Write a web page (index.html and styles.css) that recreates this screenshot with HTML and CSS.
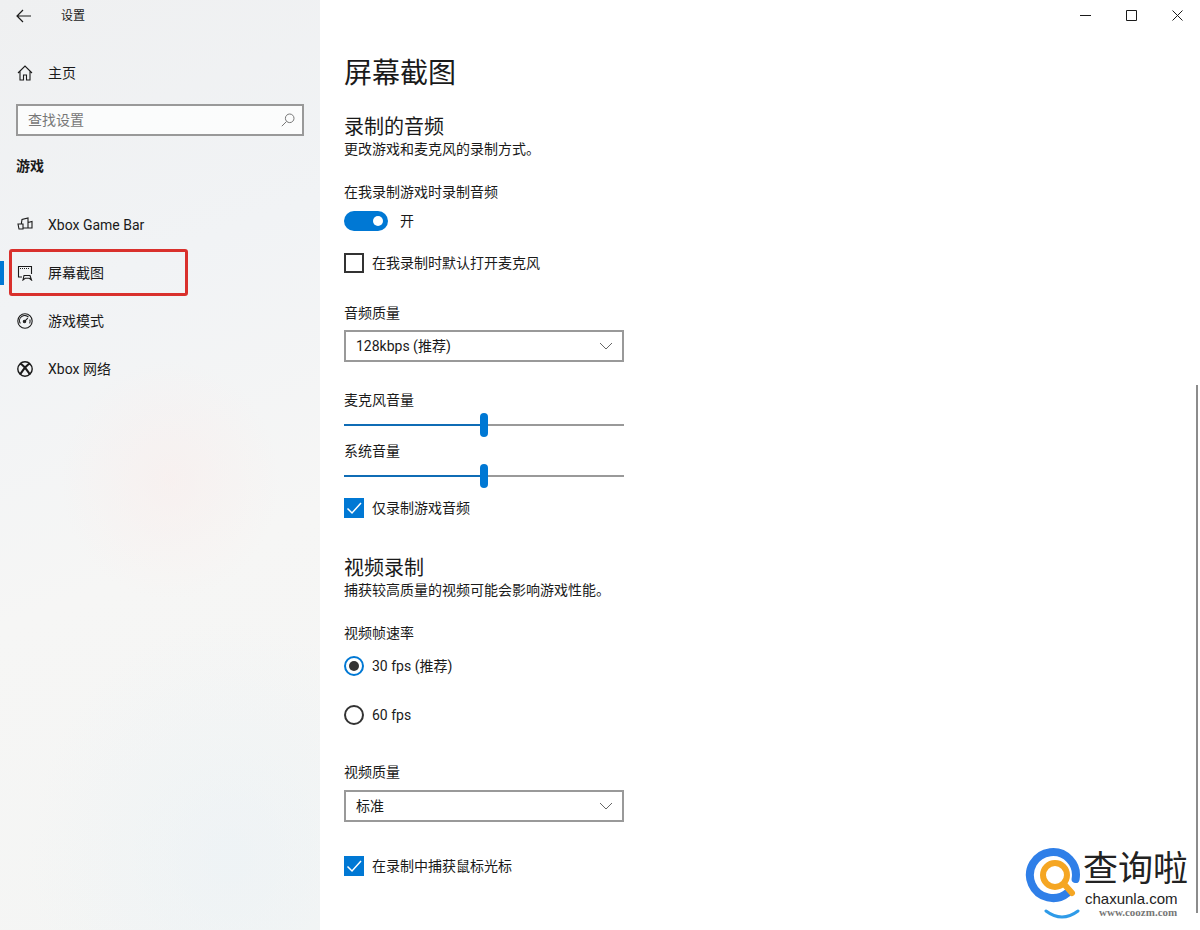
FILE: index.html
```html
<!DOCTYPE html>
<html lang="zh-CN">

<head>
    <meta charset="UTF-8">
    <title>设置</title>
    <link rel="stylesheet" href="styles.css">
</head>

<body>
    <aside class="sidebar">
        <div class="titlebar">
            <svg class="back-icon" width="16" height="14" viewBox="0 0 16 14"><path d="M7 1L1 7l6 6M1 7h14" /></svg>
            <span class="app-name">设置</span>
        </div>

        <div class="nav-item home-item">
            <svg class="nav-icon" width="16" height="16" viewBox="0 0 16 16"><path d="M1 8L8 1l7 7M3 6v9h3.500v-5h3v5H13V6" /></svg>
            <span>主页</span>
        </div>

        <div class="search-box">
            <span>查找设置</span>
            <svg class="search-icon" width="14" height="14" viewBox="0 0 14 14"><circle cx="8.700" cy="5.300" r="4.300" /><path d="M5.600 8.400L.8 13.200" /></svg>
        </div>

        <div class="group-title">游戏</div>

        <nav class="nav-list">
            <div class="nav-item">
                <svg class="nav-icon" width="16" height="16" viewBox="0 0 16 16"><path d="M1 7h5v5H2zM4.300 7L5 2.500l6-1.500v10H6M11 5.500l4-1v6.500h-4" /></svg>
                <span>Xbox Game Bar</span>
            </div>
            <div class="nav-item active">
                <svg class="nav-icon" width="16" height="16" viewBox="0 0 16 16"><path d="M1 1.500h14M1.500 1.500V12H5M14.500 1.500V9" /><path d="M6 15l1-4.500h6l1.500 4.500-2.200-1.700H8.200z" /><path class="dots" d="M3 3.500h10" /></svg>
                <span>屏幕截图</span>
                <div class="highlight"></div>
            </div>
            <div class="nav-item">
                <svg class="nav-icon" width="16" height="16" viewBox="0 0 16 16"><circle cx="8" cy="8" r="7.200" /><path d="M3.300 10.500A5.200 5.200 0 0 1 11.500 4.200M12.800 6.500a5.200 5.200 0 0 1-.1 4M6.800 9.200l4-4" /><circle cx="7.500" cy="8.500" r="1.200" /></svg>
                <span>游戏模式</span>
            </div>
            <div class="nav-item">
                <svg class="nav-icon" width="16" height="16" viewBox="0 0 16 16"><circle cx="8" cy="8" r="7.200" stroke-width="1.400" /><path class="xbox-cross" d="M3 2.500C6 3.500 10 9 13 13.500M13 2.500C10 3.500 6 9 3 13.500" /></svg>
                <span>Xbox 网络</span>
            </div>
        </nav>
    </aside>

    <main class="content">
        <h1>屏幕截图</h1>

        <h2 class="first-heading">录制的音频</h2>
        <p>更改游戏和麦克风的录制方式。</p>

        <div class="label record-label">在我录制游戏时录制音频</div>
        <div class="toggle-row">
            <span class="toggle"><span class="toggle-knob"></span></span>
            <span>开</span>
        </div>
        <div class="check-row mic-check">
            <span class="checkbox"></span>
            <span>在我录制时默认打开麦克风</span>
        </div>

        <div class="label quality-label">音频质量</div>
        <div class="select">
            <span>128kbps (推荐)</span>
            <svg width="14" height="8" viewBox="0 0 14 8"><path d="M1 1l6 6 6-6" /></svg>
        </div>

        <div class="label mic-label">麦克风音量</div>
        <div class="slider">
            <span class="slider-fill"></span><span class="slider-thumb"></span><span class="slider-rest"></span>
        </div>
        <div class="label system-label">系统音量</div>
        <div class="slider">
            <span class="slider-fill"></span><span class="slider-thumb"></span><span class="slider-rest"></span>
        </div>
        <div class="check-row game-check">
            <span class="checkbox checked"><svg width="20" height="20" viewBox="0 0 20 20"><path d="M3.500 10.500l4.500 4.500 9-10" /></svg></span>
            <span>仅录制游戏音频</span>
        </div>

        <h2 class="video-heading">视频录制</h2>
        <p>捕获较高质量的视频可能会影响游戏性能。</p>

        <div class="label rate-label">视频帧速率</div>
        <div class="radio-row first-radio">
            <span class="radio selected"></span>
            <span>30 fps (推荐)</span>
        </div>
        <div class="radio-row second-radio">
            <span class="radio"></span>
            <span>60 fps</span>
        </div>

        <div class="label video-quality-label">视频质量</div>
        <div class="select video-select">
            <span>标准</span>
            <svg width="14" height="8" viewBox="0 0 14 8"><path d="M1 1l6 6 6-6" /></svg>
        </div>
        <div class="check-row cursor-check">
            <span class="checkbox checked"><svg width="20" height="20" viewBox="0 0 20 20"><path d="M3.500 10.500l4.500 4.500 9-10" /></svg></span>
            <span>在录制中捕获鼠标光标</span>
        </div>

        <!-- window buttons -->
        <div class="window-controls">
            <svg width="11" height="11" viewBox="0 0 11 11"><path d="M0 5.500h11" /></svg>
            <svg width="11" height="11" viewBox="0 0 11 11"><path d="M.5.500h10v10H.5z" /></svg>
            <svg width="11" height="11" viewBox="0 0 11 11"><path d="M.5.500l10 10M10.500.500l-10 10" /></svg>
        </div>

        <div class="scrollbar"></div>

        <div class="watermark">
            <svg class="watermark-icon" width="62" height="74" viewBox="0 0 62 74">
                <path class="ring" d="M42.800 46.600A23 23 0 1 1 50.600 33" />
                <circle class="lens" cx="30" cy="29" r="12" />
                <path class="lens" d="M39 38l8 9" />
                <path class="smile" d="M21 65q16 12 32 0" />
            </svg>
            <div class="watermark-text">
                <div class="watermark-name">查询啦</div>
                <div class="watermark-domain">chaxunla.com</div>
                <div class="watermark-url">www.coozm.com</div>
            </div>
        </div>
    </main>
</body>

</html>
```

FILE: styles.css
```css
* {
    box-sizing: border-box;
}

body {
    margin: 0;
    height: 930px;
    display: flex;
    overflow: hidden;
    background: #fff;
    color: #1a1a1a;
    font-family: Roboto, "Noto Sans CJK SC", sans-serif;
    font-size: 14px;
    line-height: 20px;
}

svg {
    fill: none;
    stroke: currentColor;
    stroke-width: 1;
}

/* left column */
.sidebar {
    width: 320px;
    flex-shrink: 0;
    background:
        radial-gradient(ellipse 110px 120px at 170px 480px, rgba(250, 236, 234, 0.5), rgba(250, 236, 234, 0)),
        radial-gradient(ellipse 200px 240px at 230px 860px, rgba(232, 241, 246, 0.5), rgba(232, 241, 246, 0)),
        linear-gradient(160deg, #eff0f1 0%, #f1f3f5 30%, #f6f6f5 60%, #f4f5f4 100%);
}

.titlebar {
    height: 32px;
    display: flex;
    align-items: center;
    padding-left: 16px;
}

.back-icon {
    stroke-width: 1.2;
}

.app-name {
    margin-left: 29px;
    font-size: 12px;
}

.nav-item {
    position: relative;
    height: 48px;
    display: flex;
    align-items: center;
    padding-left: 17px;
}

.nav-item span {
    margin-left: 15px;
}

.nav-icon {
    stroke-width: 1.1;
}

.dots {
    stroke-dasharray: 1 1;
}

.xbox-cross {
    stroke-width: 2.2;
}

.home-item {
    margin-top: 17px;
}

.search-box {
    width: 288px;
    height: 32px;
    margin: 7px 0 0 16px;
    padding: 0 7px 0 10px;
    display: flex;
    align-items: center;
    justify-content: space-between;
    border: 2px solid #999;
    background: rgba(255, 255, 255, 0.75);
    color: #777;
}

.search-icon {
    color: #777;
}

.group-title {
    margin: 20px 0 0 16px;
    font-weight: 700;
}

.nav-list {
    margin-top: 25px;
}

.active::before {
    content: "";
    position: absolute;
    left: 0;
    top: 12px;
    width: 4px;
    height: 24px;
    background: #0078d4;
}

.highlight {
    position: absolute;
    left: 9px;
    top: 0;
    width: 179px;
    height: 47px;
    border: 3px solid #d9302c;
    border-radius: 3px;
}

/* right column */
.content {
    position: relative;
    flex: 1;
    padding: 54px 0 0 24px;
}

h1 {
    margin: 0;
    font-size: 28px;
    font-weight: 400;
    line-height: 40px;
}

h2 {
    margin: 0;
    font-size: 20px;
    font-weight: 400;
    line-height: 26px;
}

p {
    margin: 0;
}

.first-heading {
    margin-top: 20px;
    margin-bottom: -1px;
}

.video-heading {
    margin-top: 37px;
    margin-bottom: -1px;
}

.record-label {
    margin-top: 23px;
}

.rate-label {
    margin-top: 23px;
}

.quality-label {
    margin-top: 30px;
}

.mic-label {
    margin-top: 28px;
}

.system-label {
    margin-top: 4px;
}

.video-quality-label {
    margin-top: 37px;
}

.toggle-row {
    margin-top: 9px;
    height: 20px;
    display: flex;
    align-items: center;
    gap: 12px;
}

.toggle {
    width: 44px;
    height: 20px;
    padding-right: 5px;
    display: flex;
    align-items: center;
    justify-content: flex-end;
    border-radius: 10px;
    background: #0078d4;
}

.toggle-knob {
    width: 10px;
    height: 10px;
    border-radius: 50%;
    background: #fff;
}

.check-row,
.radio-row {
    height: 20px;
    display: flex;
    align-items: center;
    gap: 8px;
}

.mic-check {
    margin-top: 22px;
}

.game-check {
    margin-top: 10px;
}

.cursor-check {
    margin-top: 34px;
}

.checkbox {
    width: 20px;
    height: 20px;
    border: 2px solid #333;
}

.checkbox.checked {
    border: none;
    background: #0078d4;
    color: #fff;
}

.checkbox svg {
    display: block;
    stroke-width: 1.5;
}

.select {
    width: 280px;
    height: 32px;
    margin-top: 7px;
    padding: 0 9px 0 10px;
    display: flex;
    align-items: center;
    justify-content: space-between;
    border: 2px solid #999;
}

.video-select {
    margin-top: 8px;
}

.select svg {
    color: #666;
}

.slider {
    width: 280px;
    height: 24px;
    margin-top: 3px;
    display: flex;
    align-items: center;
}

.slider-fill {
    width: 136px;
    height: 2px;
    background: #0f6cb5;
}

.slider-thumb {
    width: 8px;
    height: 24px;
    border-radius: 4px;
    background: #0078d4;
}

.slider-rest {
    flex: 1;
    height: 2px;
    background: #999;
}

.first-radio {
    margin-top: 13px;
}

.second-radio {
    margin-top: 29px;
}

.radio {
    width: 20px;
    height: 20px;
    border: 2px solid #333;
    border-radius: 50%;
}

.radio.selected {
    display: flex;
    align-items: center;
    justify-content: center;
    border-color: #0078d4;
}

.radio.selected::after {
    content: "";
    width: 10px;
    height: 10px;
    border-radius: 50%;
    background: #333;
}

.window-controls {
    position: absolute;
    top: 10px;
    right: 17px;
    display: flex;
    gap: 35px;
}

.window-controls svg {
    display: block;
}

.scrollbar {
    position: absolute;
    top: 385px;
    right: 2px;
    width: 2px;
    height: 528px;
    background: #8c8c8c;
}

/* site logo stamped over the shot */
.watermark {
    position: absolute;
    left: 705px;
    top: 846px;
    display: flex;
    background: #fff;
}

.watermark-icon {
    display: block;
}

.ring {
    stroke: #2f7fe8;
    stroke-width: 8;
    stroke-linecap: round;
}

.lens {
    stroke: #f5a623;
    stroke-width: 6;
    stroke-linecap: round;
}

.smile {
    stroke: #2f9be8;
    stroke-width: 3;
    stroke-linecap: round;
}

.watermark-text {
    width: 107px;
    margin-left: -4px;
}

.watermark-name {
    font-family: "Noto Sans CJK SC", sans-serif;
    font-size: 35px;
    line-height: 40px;
    color: #222;
    white-space: nowrap;
}

.watermark-domain {
    margin-top: 6px;
    padding-left: 2px;
    font-family: "Liberation Sans", sans-serif;
    font-size: 15px;
    line-height: 14px;
    color: #222;
}

.watermark-url {
    margin-top: 1px;
    padding-left: 16px;
    font-family: "Liberation Serif", serif;
    font-size: 11px;
    font-weight: 700;
    line-height: 10px;
    color: #777;
    white-space: nowrap;
}
```
